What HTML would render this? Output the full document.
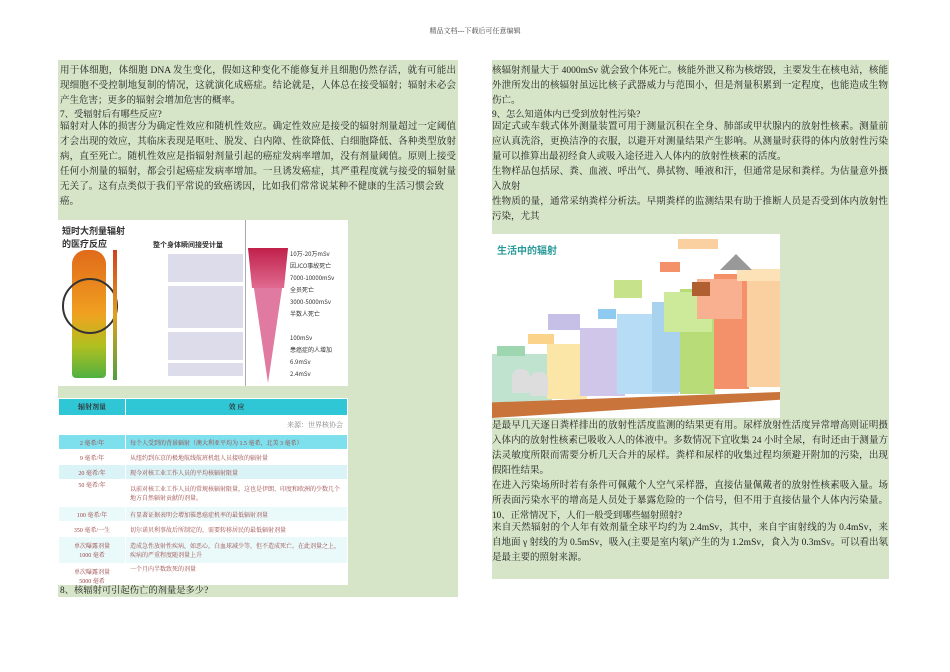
<!DOCTYPE html>
<html><head><meta charset="utf-8"><style>
body{margin:0;width:950px;height:672px;background:#fff;position:relative;overflow:hidden;font-family:"Liberation Serif","Noto Serif CJK SC",serif;color:#222;}
.hdr{position:absolute;top:26px;left:0;width:950px;text-align:center;font-size:7px;color:#444}
.panel{position:absolute;background:#d6e4c8}
.t{position:absolute;left:2px;width:396px;font-size:9.5px;line-height:15px}
.t div{white-space:nowrap;overflow:hidden;height:15px}
.t .j{text-align:justify;text-align-last:justify}
.sm{font-size:9.3px}
table{border-collapse:collapse;font-size:6px;color:#944}
td{border:1px solid #fff;padding:0 4px;height:14px}
</style></head><body>
<div class="hdr">精品文档---下载后可任意编辑</div>

<div class="panel" style="left:58px;top:60px;width:400px;height:537px">
<div class="t" style="top:4px">
<div class="j">用于体细胞，体细胞 DNA 发生变化，假如这种变化不能修复并且细胞仍然存活，就有可能出</div>
<div class="j">现细胞不受控制地复制的情况，这就演化成癌症。结论就是，人体总在接受辐射；辐射未必会</div>
<div>产生危害；更多的辐射会增加危害的概率。</div></div>
<div class="t sm" style="top:48px"><div>7、受辐射后有哪些反应?</div></div>
<div class="t" style="top:60px">
<div class="j">辐射对人体的损害分为确定性效应和随机性效应。确定性效应是接受的辐射剂量超过一定阈值</div>
<div class="j">才会出现的效应，其临床表现是呕吐、脱发、白内障、性欲降低、白细胞降低、各种类型放射</div>
<div class="j">病，直至死亡。随机性效应是指辐射剂量引起的癌症发病率增加，没有剂量阈值。原则上接受</div>
<div class="j">任何小剂量的辐射，都会引起癌症发病率增加。一旦诱发癌症，其严重程度就与接受的辐射量</div>
<div class="j" style="width:384px">无关了。这有点类似于我们平常说的致癌诱因，比如我们常常说某种不健康的生活习惯会致</div>
<div>癌。</div></div>
<!-- image 1 -->
<div style="position:absolute;left:0;top:160px;width:290px;height:166px;background:#fff">
 <div style="position:absolute;left:4px;top:4px;font:bold 9px sans-serif;color:#333;font-family:'Noto Sans CJK SC',sans-serif">短时大剂量辐射<br>的医疗反应</div>
 <div style="position:absolute;left:14px;top:30px;width:34px;height:128px;border-radius:14px 14px 4px 4px;background:linear-gradient(#e06a1a,#f0a020 50%,#b0c020 75%,#50b040)"></div>
 <div style="position:absolute;left:4px;top:58px;width:52px;height:52px;border-radius:50%;border:2px solid #333;"></div>
 <div style="position:absolute;left:55px;top:30px;width:4px;height:130px;background:linear-gradient(#d04020,#e0a020,#50a040)"></div>
 <div style="position:absolute;left:95px;top:20px;font:bold 7px 'Noto Sans CJK SC',sans-serif;color:#333">整个身体瞬间接受计量</div>
 <div style="position:absolute;left:110px;top:34px;width:75px;height:28px;background:#dcdcea"></div>
 <div style="position:absolute;left:110px;top:66px;width:75px;height:42px;background:#dcdcea"></div>
 <div style="position:absolute;left:110px;top:112px;width:75px;height:28px;background:#dcdcea"></div>
 <div style="position:absolute;left:110px;top:143px;width:75px;height:13px;background:#dcdcea"></div>
 <div style="position:absolute;left:187px;top:0;width:1px;height:166px;background:#aaa"></div>
 <div style="position:absolute;left:190px;top:28px;width:0;height:0;border-left:20px solid transparent;border-right:20px solid transparent;border-top:135px solid #e07aa0"></div>
 <div style="position:absolute;left:190px;top:28px;width:40px;height:40px;background:linear-gradient(#c0204a,#e06a90);clip-path:polygon(0 0,100% 0,90% 100%,10% 100%)"></div>
 <div style="position:absolute;left:232px;top:28px;font:6px 'Noto Sans CJK SC',sans-serif;color:#333;line-height:12px">10万-20万mSv<br>因JCO事故死亡<br>7000-10000mSv<br>全员死亡<br>3000-5000mSv<br>半数人死亡<br><br>100mSv<br>患癌症的人增加<br>6.9mSv<br>2.4mSv</div>
</div>
<!-- table -->
<div style="position:absolute;left:0;top:338px;width:290px;height:187px;background:#fff;overflow:hidden">
<table style="width:290px">
<tr style="background:#2fc6d6;color:#333;font-weight:bold;font-size:7px"><td style="width:58px;height:16px;text-align:center">辐射剂量</td><td style="text-align:center">效 应</td></tr>
<tr><td></td><td style="text-align:right;color:#888;font-size:7px;height:18px">来源：世界核协会</td></tr>
<tr style="background:#7ee0ec"><td style="text-align:center">2 毫希/年</td><td>每个人受到的背景辐射（澳大利亚平均为 1.5 毫希，北美 3 毫希）</td></tr>
<tr style="background:#fff"><td style="text-align:center">9 毫希/年</td><td>从纽约到东京的极地航线航班机组人员接收的辐射量</td></tr>
<tr style="background:#d9f3f6"><td style="text-align:center">20 毫希/年</td><td>现今对核工业工作人员的平均核辐射限量</td></tr>
<tr style="background:#fff"><td style="text-align:center;height:26px;vertical-align:top">50 毫希/年</td><td>以前对核工业工作人员的常规核辐射限量，这也是伊朗、印度和欧洲的少数几个地方自然辐射贡献的剂量。</td></tr>
<tr style="background:#eafafb"><td style="text-align:center">100 毫希/年</td><td>有显著证据表明会增加罹患癌症机率的最低辐射剂量</td></tr>
<tr style="background:#fff"><td style="text-align:center">350 毫希/一生</td><td>切尔诺贝利事故后所制定的，需要转移居民的最低辐射剂量</td></tr>
<tr style="background:#eafafb"><td style="text-align:center;height:26px">单次曝露剂量<br>1000 毫希</td><td>造成急性放射性疾病，如恶心，白血球减少等，但不造成死亡。在此剂量之上，疾病的严重程度随剂量上升</td></tr>
<tr style="background:#fff"><td style="text-align:center;height:24px">单次曝露剂量<br>5000 毫希</td><td style="vertical-align:top">一个月内半数致死的剂量</td></tr>
</table></div>
<div class="t sm" style="top:524px"><div>8、核辐射可引起伤亡的剂量是多少?</div></div>
</div>

<div class="panel" style="left:492px;top:60px;width:397px;height:519px">
<div class="t" style="top:4px;left:0">
<div class="j">核辐射剂量大于 4000mSv 就会致个体死亡。核能外泄又称为核熔毁，主要发生在核电站，核能</div>
<div class="j">外泄所发出的核辐射虽远比核子武器威力与范围小，但是剂量积累到一定程度，也能造成生物</div>
<div>伤亡。</div></div>
<div class="t sm" style="top:48px;left:0"><div>9、怎么知道体内已受到放射性污染?</div></div>
<div class="t" style="top:60px;left:0">
<div class="j">固定式或车载式体外测量装置可用于测量沉积在全身、肺部或甲状腺内的放射性核素。测量前</div>
<div class="j">应认真洗浴，更换洁净的衣服，以避开对测量结果产生影响。从测量时获得的体内放射性污染</div>
<div>量可以推算出最初经食人或吸入途径进入人体内的放射性核素的活度。</div>
<div class="j">生物样品包括尿、粪、血液、呼出气、鼻拭物、唾液和汗，但通常是尿和粪样。为估量意外摄</div>
<div>入放射</div>
<div class="j">性物质的量，通常采纳粪样分析法。早期粪样的监测结果有助于推断人员是否受到体内放射性</div>
<div>污染，尤其</div></div>
<!-- image 2 -->
<div style="position:absolute;left:0;top:174px;width:288px;height:184px;background:#fff;overflow:hidden">
 <div style="position:absolute;left:5px;top:8px;font:bold 10px 'Noto Sans CJK SC',sans-serif;color:#2a9a9a">生活中的辐射</div>
 <div style="position:absolute;left:0;top:120px;width:60px;height:50px;background:#bfe3cf"></div>
 <div style="position:absolute;left:55px;top:110px;width:40px;height:55px;background:#fbe6a8"></div>
 <div style="position:absolute;left:88px;top:94px;width:45px;height:68px;background:#cfc6ea"></div>
 <div style="position:absolute;left:125px;top:80px;width:62px;height:80px;background:#b7dcf5"></div>
 <div style="position:absolute;left:160px;top:68px;width:28px;height:90px;background:#a9d2ee"></div>
 <div style="position:absolute;left:188px;top:55px;width:35px;height:105px;background:#b8dc78"></div>
 <div style="position:absolute;left:172px;top:58px;width:48px;height:40px;background:#cde99a"></div>
 <div style="position:absolute;left:222px;top:40px;width:35px;height:115px;background:#f4906a"></div>
 <div style="position:absolute;left:205px;top:45px;width:45px;height:40px;background:#f8b090"></div>
 <div style="position:absolute;left:255px;top:38px;width:33px;height:115px;background:#fbd0a0"></div>
 <div style="position:absolute;left:245px;top:35px;width:43px;height:12px;background:#fde2b8"></div>
 <div style="position:absolute;left:0;top:158px;width:288px;height:26px;background:#c8743a;clip-path:polygon(0 40%,100% 0,100% 30%,0 100%)"></div>
 <div style="position:absolute;left:228px;top:20px;width:0;height:0;border-left:16px solid transparent;border-right:16px solid transparent;border-bottom:16px solid #999"></div>
 <div style="position:absolute;left:200px;top:48px;width:18px;height:14px;background:#b06030"></div>
 <div style="position:absolute;left:20px;top:135px;width:18px;height:24px;border-radius:8px 8px 2px 2px;background:#ddd"></div>
 <div style="position:absolute;left:38px;top:138px;width:18px;height:24px;border-radius:8px 8px 2px 2px;background:#ddd"></div>
 <div style="position:absolute;left:5px;top:112px;width:28px;height:10px;background:#9ed6b0"></div>
 <div style="position:absolute;left:36px;top:100px;width:26px;height:10px;background:#fbd38a"></div>
 <div style="position:absolute;left:56px;top:80px;width:32px;height:16px;background:#c6c0e6"></div>
 <div style="position:absolute;left:106px;top:75px;width:18px;height:10px;background:#8fcbf0"></div>
 <div style="position:absolute;left:122px;top:46px;width:28px;height:18px;background:#c6e28a"></div>
 <div style="position:absolute;left:168px;top:28px;width:20px;height:10px;background:#f4906a"></div>
 <div style="position:absolute;left:186px;top:5px;width:40px;height:10px;background:#fbd0a0"></div>
</div>
<div class="t" style="top:359px;left:0">
<div class="j">是最早几天逐日粪样排出的放射性活度监测的结果更有用。尿样放射性活度异常增高则证明摄</div>
<div class="j">入体内的放射性核素已吸收入人的体液中。多数情况下宜收集 24 小时全尿，有时还由于测量方</div>
<div class="j">法灵敏度所限而需要分析几天合并的尿样。粪样和尿样的收集过程均须避开附加的污染，出现</div>
<div>假阳性结果。</div>
<div class="j">在进入污染场所时若有条件可佩戴个人空气采样器，直接估量佩戴者的放射性核素吸入量。场</div>
<div class="j">所表面污染水平的增高是人员处于暴露危险的一个信号，但不用于直接估量个人体内污染量。</div></div>
<div class="t sm" style="top:449px;left:0"><div>10、正常情况下，人们一般受到哪些辐射照射?</div></div>
<div class="t" style="top:461px;left:0">
<div class="j">来自天然辐射的个人年有效剂量全球平均约为 2.4mSv，其中，来自宇宙射线的为 0.4mSv，来</div>
<div class="j">自地面 γ 射线的为 0.5mSv，吸入(主要是室内氡)产生的为 1.2mSv，食入为 0.3mSv。可以看出氡</div>
<div>是最主要的照射来源。</div></div>
</div>
</body></html>
